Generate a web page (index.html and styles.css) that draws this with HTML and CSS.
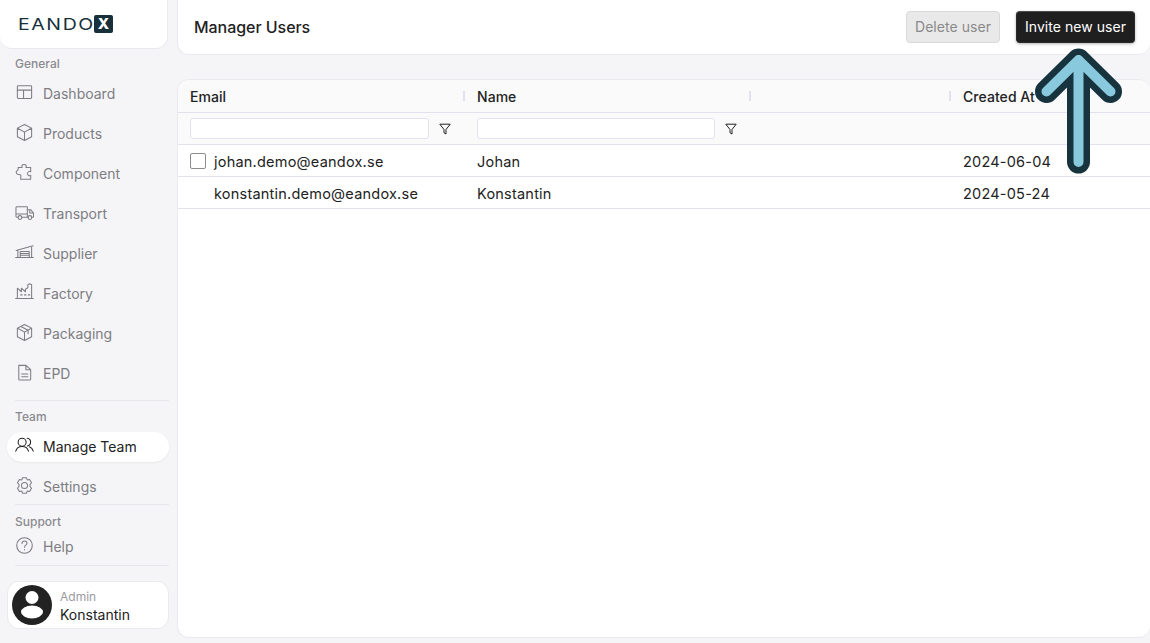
FILE: index.html
```html
<!DOCTYPE html>
<html lang="en">
<head>
<meta charset="utf-8">
<title>Manager Users</title>
<link rel="stylesheet" href="styles.css">
</head>
<body>
<div class="app">
  <aside class="sidebar">
    <div class="logo-card">
      <span class="logo-text">EANDO</span><span class="logo-x">X</span>
    </div>
    <div class="section-label first">General</div>
    <nav class="nav-group">
      <div class="nav-item"><svg class="ico" viewBox="0 0 20 20"><rect x="2.500" y="2.800" width="15" height="13.500" rx="1"/><path d="M2.500 7.500h15M9 7.500v8.800"/></svg>Dashboard</div>
      <div class="nav-item"><svg class="ico" viewBox="0 0 20 20"><path d="M10 1.500l7.500 3.900v9L10 18.500l-7.500-4.100v-9zM2.800 5.600l7.200 4 7.200-4M10 9.600v8.900"/></svg>Products</div>
      <div class="nav-item"><svg class="ico" viewBox="0 0 20 20"><path d="M7.500 4.800c-.6-1.200-.4-3.300 2-3.300s2.700 2.100 2 3.300h5v4.400c-1.300-.7-3.300-.3-3.300 1.900s2 2.600 3.300 1.900V17H6v-2.300c.7-1.200.2-2.700-1.900-2.700-3 0-3.700-3-1.700-4.300.5-.3.800-.5.900-.5V4.800z"/></svg>Component</div>
      <div class="nav-item"><svg class="ico" viewBox="0 0 20 20"><path d="M3.200 15H2a1 1 0 0 1-1-1V5a1 1 0 0 1 1-1h11v11H7.200M13 7h3.500l3 3.500V14a1 1 0 0 1-1 1h-.8M13 15h.8M1 11.500h12M15.500 7.200v3.300h4"/><circle cx="5.200" cy="15.300" r="2"/><circle cx="15.700" cy="15.300" r="2"/></svg>Transport</div>
      <div class="nav-item"><svg class="ico" viewBox="0 0 20 20"><path d="M.7 15.300h18.600M1.200 7.800L19 3M3 7.400v7.900M17.500 3.500v11.800M5.500 15.300V9h9.500v6.300M5.500 11h9.500M5.500 13h9.500"/></svg>Supplier</div>
      <div class="nav-item"><svg class="ico" viewBox="0 0 20 20"><path d="M.7 16.300h18.600M2.500 16.300V5.500l4.200 3.700V5.500l4.300 3.700V6.500l2.500-1.500V1.800L15.500.8l2 1v14.500M6 12.500h1.500M10 12.500h1.500M14 12.500h1.500"/></svg>Factory</div>
      <div class="nav-item"><svg class="ico" viewBox="0 0 20 20"><path d="M10 1.500l7.500 3.900v9L10 18.500l-7.500-4.100v-9zM2.800 5.600l7.200 4 7.200-4M10 9.600v8.900M6.200 3.600l7.600 4.100v3.500"/></svg>Packaging</div>
      <div class="nav-item"><svg class="ico" viewBox="0 0 20 20"><path d="M4 2.500h7.500L16.500 7v10a1 1 0 0 1-1 1H5a1 1 0 0 1-1-1zM11.500 2.500V7h5M7 11.500h6.500M7 14.500h6.500"/></svg>EPD</div>
    </nav>
    <hr class="rule rule-team">
    <div class="section-label">Team</div>
    <div class="nav-item active"><svg class="ico" viewBox="0 0 20 20"><circle cx="7.500" cy="6.500" r="4.200"/><path d="M.8 16c.7-3 3.200-5 6.700-5s6 2 6.700 5M12.800 2.400c2.300.2 3.600 1.900 3.600 4s-1.300 3.800-3.400 4.100M15.200 11.400c2 .7 3.400 2.300 4 4.600"/></svg>Manage Team</div>
    <div class="nav-item settings"><svg class="ico" viewBox="0 0 20 20"><circle cx="10" cy="10" r="3.200"/><path d="M8 1.800h4l.9 2.300 2.500-.5 2 3.500-1.600 1.900v2l1.600 1.900-2 3.500-2.500-.5-.9 2.300H8l-.9-2.300-2.500.5-2-3.500L4.200 11V9L2.600 7.100l2-3.500 2.500.5z"/></svg>Settings</div>
    <hr class="rule rule-support">
    <div class="section-label support">Support</div>
    <div class="nav-item help"><svg class="ico" viewBox="0 0 20 20"><circle cx="10" cy="10" r="8.200"/><path d="M7.400 7.800c0-1.600 1.100-2.500 2.600-2.500s2.600.9 2.600 2.200c0 2.200-2.600 2-2.600 4.300M10 14.200v.4"/></svg>Help</div>
    <hr class="rule rule-user">
    <div class="user-card">
      <svg class="avatar" viewBox="0 0 40 40"><circle cx="20" cy="20" r="20" fill="#222"/><circle cx="20" cy="12.500" r="6.500" fill="#fff"/><ellipse cx="20" cy="27" rx="11" ry="6.500" fill="#fff"/></svg>
      <div class="user-meta"><div class="user-role">Admin</div><div class="user-name">Konstantin</div></div>
    </div>
  </aside>
  <main class="main">
    <header class="topbar">
      <h1 class="title">Manager Users</h1>
      <div class="actions">
        <button class="btn btn-disabled">Delete user</button>
        <button class="btn btn-primary">Invite new user</button>
      </div>
    </header>
    <section class="table-card">
      <div class="row head">
        <div class="cell c1">Email<i class="sep"></i></div>
        <div class="cell c2">Name<i class="sep"></i></div>
        <div class="cell c3"><i class="sep"></i></div>
        <div class="cell c4">Created At</div>
      </div>
      <div class="row filters">
        <div class="cell c1"><input class="filter-input" type="text" aria-label="Email"><svg class="funnel" viewBox="0 0 12 12"><path d="M.8 1.200h10.400L7 6.500V11L5 9.800V6.500z"/></svg></div>
        <div class="cell c2"><input class="filter-input" type="text" aria-label="Name"><svg class="funnel" viewBox="0 0 12 12"><path d="M.8 1.200h10.400L7 6.500V11L5 9.800V6.500z"/></svg></div>
        <div class="cell c3"></div>
        <div class="cell c4"></div>
      </div>
      <div class="row body">
        <div class="cell c1"><span class="check"></span>johan.demo@eandox.se</div>
        <div class="cell c2">Johan</div>
        <div class="cell c3"></div>
        <div class="cell c4">2024-06-04</div>
      </div>
      <div class="row body">
        <div class="cell c1 indent">konstantin.demo@eandox.se</div>
        <div class="cell c2">Konstantin</div>
        <div class="cell c3"></div>
        <div class="cell c4">2024-05-24</div>
      </div>
    </section>
  </main>
</div>
<svg class="arrow" viewBox="0 0 100 140" aria-hidden="true">
  <path class="arrow-outer" d="M49.500 20V122M17.500 51.500L49.500 20 81.500 51.500"/>
  <path class="arrow-inner" d="M49.500 20V122M17.500 51.500L49.500 20 81.500 51.500"/>
</svg>
</body>
</html>
```
FILE: styles.css
```css
* { box-sizing: border-box; }
html, body { margin: 0; height: 100%; }
body {
  background: #f5f5f8;
  font-family: Inter, "Liberation Sans", sans-serif;
  color: #222;
  overflow: hidden;
}
.app { display: flex; width: 1150px; height: 643px; }
.sidebar { width: 177px; flex: none; display: flex; flex-direction: column; }
.logo-card {
  width: 168px; height: 49px;
  background: #fff;
  border: 1px solid #e9e9ee;
  border-top: 0; border-left: 0;
  border-radius: 0 0 12px 12px;
  padding: 15px 0 0 18px;
  display: flex; align-items: flex-start;
}
.logo-text {
  width: 76px; height: 18px;
  font-size: 16px; line-height: 18px; letter-spacing: 1.300px; color: #17303a; font-weight: 400;
  transform: scaleX(1.220); transform-origin: left center;
}
.logo-x {
  width: 19px; height: 18px;
  background: #17303a; color: #fff;
  font-size: 15px; font-weight: 800; line-height: 18px; text-align: center; border-radius: 2px;
}
.section-label { font-size: 12px; line-height: 16px; color: #8a8a8f; padding-left: 15px; font-weight: 500; }
.section-label.first { margin-top: 7px; }
.nav-group { display: flex; flex-direction: column; gap: 10px; margin-top: 7px; }
.nav-item {
  height: 30px; display: flex; align-items: center;
  margin-left: 7px; width: 162px;
  padding: 0 0 1px 8px; gap: 9px;
  font-size: 14px; color: #7d7d82;
}
.nav-item .ico { margin-top: -2px; }
.ico { width: 19px; height: 19px; flex: none; fill: none; stroke: currentColor; stroke-width: 1.100; stroke-linejoin: round; stroke-linecap: round; }
.nav-item.active { background: #fff; border-radius: 15px; color: #222; box-shadow: 0 1px 2px rgba(0,0,0,.06); }
.nav-item.settings { margin-top: 10px; }
.nav-item.help { margin-top: 2px; }
.rule { border: 0; height: 1px; background: #e6e6eb; margin: 0 0 0 15px; width: 154px; flex: none; }
.rule-team { margin-top: 11px; }
.rule-team + .section-label { margin-top: 8px; margin-bottom: 7px; }
.rule-support { margin-top: 2px; }
.support { margin-top: 9px; }
.rule-user { margin-top: 3px; }
.user-card {
  margin: 15px 0 0 7px; width: 162px; height: 48px;
  background: #fff; border: 1px solid #ebebef; border-radius: 12px;
  display: flex; align-items: center; padding-left: 4px; gap: 8px;
}
.avatar { width: 40px; height: 40px; flex: none; }
.user-meta { padding-top: 3px; }
.user-role { font-size: 12px; line-height: 16px; color: #9a9a9f; }
.user-name { font-size: 14px; line-height: 20px; color: #222; }
.main { flex: 1; min-width: 0; display: flex; flex-direction: column; }
.topbar {
  height: 55px; background: #fff;
  border: 1px solid #e9e9ee; border-top: 0; border-right: 0;
  border-radius: 0 0 12px 12px;
  display: flex; align-items: center; justify-content: space-between;
  padding: 0 15px 0 16px;
}
.title { margin: 0; font-size: 16px; font-weight: 500; color: #222; letter-spacing: -.05px; }
.actions { display: flex; gap: 16px; }
.btn {
  height: 32px; border-radius: 4px; font-family: inherit; font-size: 14px; letter-spacing: .05px;
  padding: 0 0 2px; border: 1px solid;
}
.btn-disabled { width: 94px; background: #e9e9e9; border-color: #d8d8d8; color: #8a8a8a; }
.btn-primary { width: 119px; background: #1f1f1f; border-color: #2a2a2a; border-top-color: #4a4a4a; color: #fff; box-shadow: 0 1px 3px rgba(0,0,0,.3); }
.table-card {
  margin-top: 24px; height: 559px;
  background: #fff; border: 1px solid #e9e9ee; border-right: 0;
  border-radius: 12px;
  overflow: hidden;
}
.row { display: grid; grid-template-columns: 287px 286px 200px 1fr; border-bottom: 1px solid #e1e1ef; align-items: center; }
.head { height: 33px; background: #fafafb; font-size: 14px; font-weight: 500; color: #222; letter-spacing: .05px; }
.filters { height: 32px; background: #fafafb; }
.body { height: 32px; font-size: 14.500px; color: #222; letter-spacing: .22px; }
.cell { position: relative; padding-left: 12px; display: flex; align-items: center; height: 100%; }
.body .cell { padding-top: 2px; }
.sep { position: absolute; right: 0; top: 11px; width: 2px; height: 10px; background: #e1e1ef; }
.filter-input { width: 239px; height: 21px; border: 1px solid #e1e1ef; border-radius: 3px; background: #fff; padding: 0; }
.c2 .filter-input { width: 238px; }
.funnel { width: 12px; height: 12px; margin-left: 10px; fill: none; stroke: #222; stroke-width: 1; stroke-linejoin: round; }
.check { width: 16px; height: 16px; border: 1.500px solid #8d8d8d; border-radius: 2px; margin: -2px 8px 0 0; flex: none; }
.body .indent { padding-left: 36px; }
.arrow { position: absolute; left: 1029px; top: 40px; width: 100px; height: 140px; }
.arrow path { fill: none; stroke-linecap: round; stroke-linejoin: round; }
.arrow-outer { stroke: #17333e; stroke-width: 23; }
.arrow-inner { stroke: #88c9de; stroke-width: 10; }
```
